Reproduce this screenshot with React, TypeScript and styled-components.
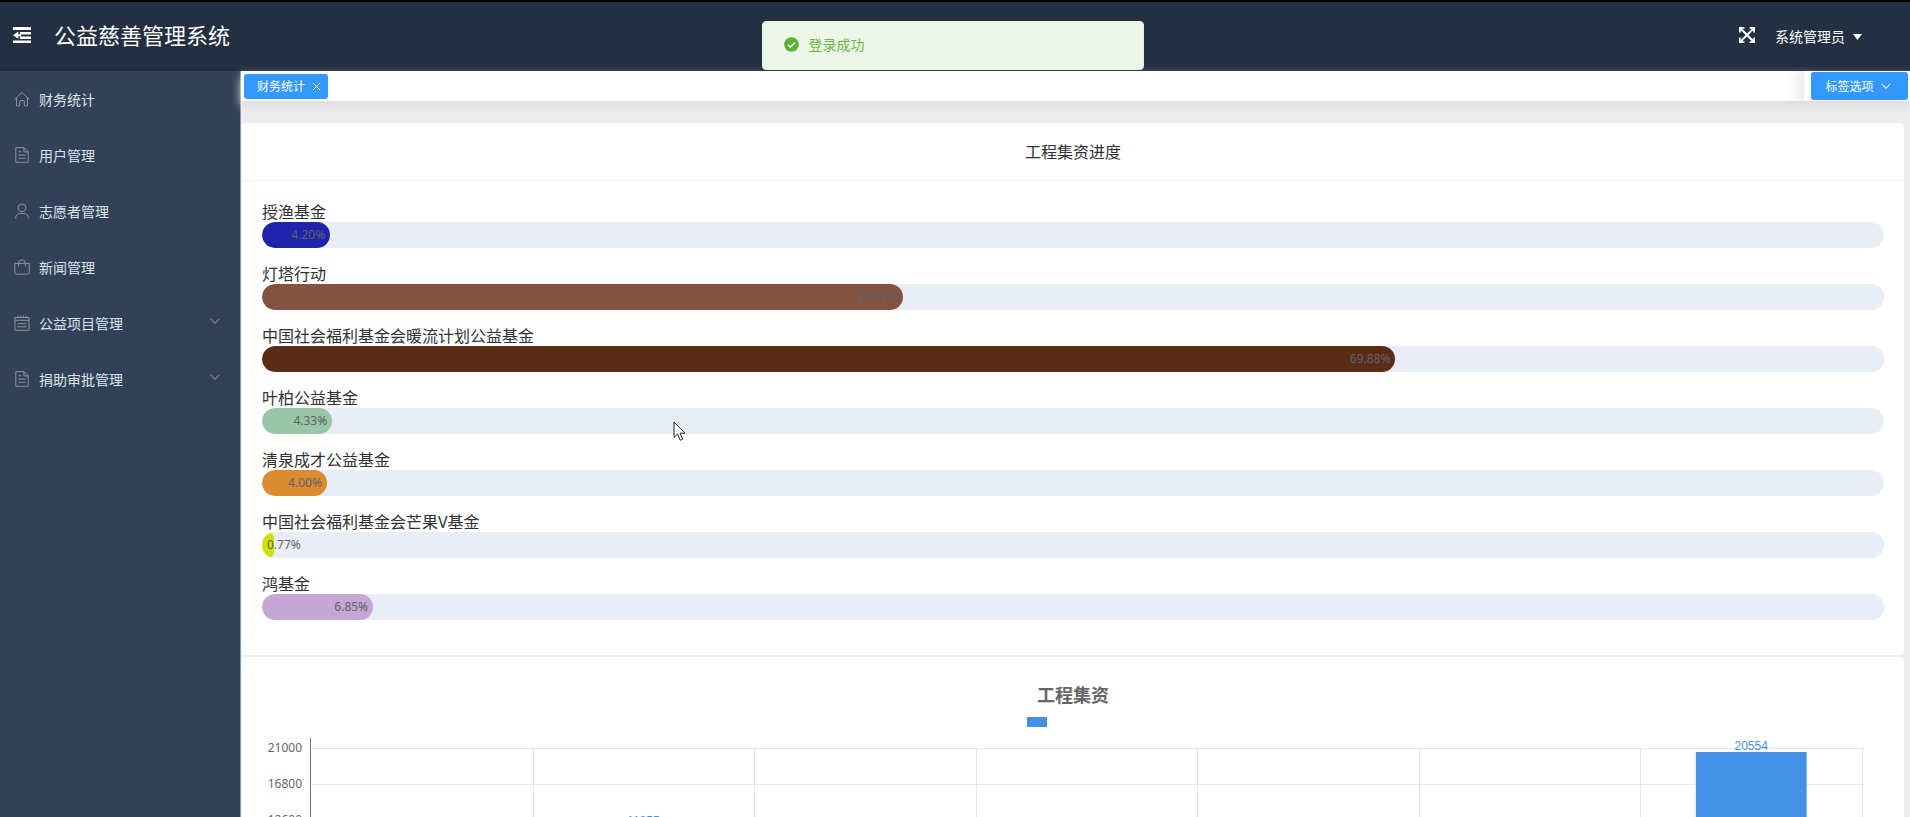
import { useLayoutEffect, useRef, useState } from "react";
import type { ReactNode } from "react";
import styled, { createGlobalStyle } from "styled-components";

const GlobalStyle = createGlobalStyle`
  * { box-sizing: border-box; }
  body {
    margin: 0;
    background: #ededed;
    color: #303133;
    font-family: "Noto Sans", "Noto Sans CJK SC", sans-serif;
    font-size: 14px;
  }
  button { font-family: inherit; border: 0; cursor: pointer; }
`;

const Page = styled.div`
  display: flex;
  flex-direction: column;
  height: 100vh;
  overflow: hidden;
`;

const Header = styled.header`
  flex: none;
  display: flex;
  align-items: center;
  height: 71px;
  padding: 0 48px 4px 12px;
  border-top: 2px solid #000;
  background: #242f42;
  color: #fff;
`;

const IconButton = styled.button`
  display: flex;
  padding: 0;
  background: none;
  color: inherit;
`;

const Title = styled.h1`
  margin: 0 auto 0 22px;
  font-size: 22px;
  font-weight: 400;
  line-height: 32px;
`;

const UserButton = styled.button`
  display: flex;
  align-items: center;
  gap: 8px;
  margin-left: 20px;
  padding: 4px 0 0;
  background: none;
  color: #fff;
  font-size: 14px;
  line-height: 20px;
`;

const Body = styled.div`
  flex: 1;
  display: flex;
  min-height: 0;
`;

const Sidebar = styled.nav`
  flex: none;
  width: 241px;
  border-right: 1px solid #8d97a5;
  background: #324157;
`;

const Menu = styled.ul`
  margin: 0;
  padding: 0;
  list-style: none;
`;

const MenuLink = styled.a`
  display: flex;
  align-items: center;
  gap: 9px;
  height: 56px;
  padding: 0 19px 0 14px;
  color: #dbe4ee;
  font-size: 14px;
  text-decoration: none;

  svg { color: #909399; }
  svg:last-child:not(:first-child) { margin: -4px 0 0 auto; }
`;

const Main = styled.main`
  flex: 1;
  display: flex;
  flex-direction: column;
  min-width: 0;
`;

const Tabs = styled.div`
  position: relative;
  z-index: 1;
  flex: none;
  display: flex;
  align-items: stretch;
  justify-content: space-between;
  height: 30px;
  padding-left: 3px;
  background: #fff;
  box-shadow: 0 5px 10px #ddd;
`;

const Tag = styled.div`
  display: flex;
  align-items: center;
  align-self: center;
  gap: 7px;
  height: 25px;
  padding: 0 7px 0 13px;
  border-radius: 3px;
  background: #39f;
  color: #fff;
  font-size: 12px;
`;

const TabTools = styled.div`
  display: flex;
  align-items: center;
  padding: 0 2px 0 7px;
  background: #fff;
  box-shadow: -3px 0 15px 3px rgba(0, 0, 0, 0.1);
  clip-path: inset(0 0 0 -20px);
`;

const ToolsButton = styled.button`
  display: flex;
  align-items: center;
  justify-content: center;
  gap: 6px;
  width: 97px;
  height: 28px;
  padding: 0 2px 0 0;
  border-radius: 3px;
  background: #39f;
  color: #fff;
  font-size: 12px;
`;

const Content = styled.div`
  flex: 1;
  min-height: 0;
  padding: 21px 5px 10px 0;
  overflow-y: auto;
  scrollbar-width: none;
`;

const Card = styled.section`
  border: 1px solid #ebeef5;
  border-radius: 4px;
  background: #fff;
`;

const CardHeader = styled.h2`
  margin: 0;
  padding: 17px 20px 15px;
  border-bottom: 1px solid #ebeef5;
  color: #303133;
  font-size: 16px;
  font-weight: 400;
  line-height: 25px;
  text-align: center;
`;

const CardBody = styled.div`
  padding: 20px;
`;

const Fund = styled.div`
  margin-bottom: 13px;
`;

const FundName = styled.div`
  height: 21px;
  color: #303133;
  font-size: 16px;
  line-height: 23px;
`;

const FundList = styled(CardBody)`
  padding-bottom: 22px;

  ${Fund} + ${Fund} { padding-top: 2px; }
`;

const Track = styled.div`
  height: 26px;
  border-radius: 100px;
  background: #e9edf5;
  overflow: hidden;
`;

const Fill = styled.div<{ $color: string }>`
  height: 100%;
  border-radius: 100px;
  background: ${(p) => p.$color};
  text-align: right;
  white-space: nowrap;
`;

const Percent = styled.span`
  display: inline-block;
  margin: 0 5px;
  color: #606266;
  font-size: 12px;
  line-height: 25px;
`;

const Message = styled.div`
  position: fixed;
  z-index: 10;
  top: 21px;
  left: 0;
  right: 5px;
  display: flex;
  align-items: center;
  gap: 10px;
  width: 382px;
  height: 49px;
  margin: 0 auto;
  padding: 0 21px 3px;
  border: 1px solid #e1f3d8;
  border-radius: 4px;
  background: #edf7e9;
  color: #67b744;
  font-size: 14px;
`;

const Pointer = styled.svg`
  position: fixed;
  z-index: 11;
  top: 421px;
  left: 673px;
  pointer-events: none;
`;

const ChartBox = styled.div`
  height: 320px;
  svg { display: block; }
`;

type IconProps = { size?: number; children: ReactNode };

const LineIcon = ({ size = 16, children }: IconProps) => (
  <svg width={size} height={size} viewBox="0 0 16 16" fill="none" stroke="currentColor" aria-hidden="true">
    {children}
  </svg>
);

const HomeIcon = () => (
  <LineIcon>
    <path d="M.7 8.4 8 1.4l7.3 7M2.5 7v7.9h3.2v-4.2c0-.8.5-1.2 1.2-1.2h2.2c.7 0 1.2.4 1.2 1.2v4.2h3.2V7" />
  </LineIcon>
);

const DocumentIcon = () => (
  <LineIcon>
    <path d="M1.8.7h8.4l4 4v10.6H1.8zM10 .9v4h4M4.4 4.7h3M4.4 8h7.2M4.4 11.3h7.2" />
  </LineIcon>
);

const UserIcon = () => (
  <LineIcon>
    <circle cx="8" cy="4.8" r="3.9" />
    <path d="M1.6 15.7c0-3.6 1.7-5.2 4.8-5.2h3.2c3.1 0 4.8 1.6 4.8 5.2" />
  </LineIcon>
);

const BagIcon = () => (
  <LineIcon>
    <path d="M.8 4.4h14.4v9.4c0 .9-.5 1.4-1.4 1.4H2.2c-.9 0-1.4-.5-1.4-1.4zM4.6 7.5V4.2a3.4 3.4 0 0 1 6.8 0v3.3" />
  </LineIcon>
);

const NotebookIcon = () => (
  <LineIcon>
    <path d="M1 2.5h14v12.8H1zM1 5.3h14M3.4 8.6h9.2M3.4 11.8h9.2M4 .5v2M6.7.5v2M9.4.5v2M12.1.5v2" />
  </LineIcon>
);

const ChevronIcon = ({ size = 12 }: { size?: number }) => (
  <LineIcon size={size}>
    <path d="m2.2 5 5.8 6 5.8-6" strokeWidth="1.4" />
  </LineIcon>
);

const FoldIcon = () => (
  <svg width="20" height="18" viewBox="0 0 20 18" fill="currentColor" aria-hidden="true">
    <path d="M1 1h18v3H1zM8 6h11v2.5H8zM8 10.5h11V13H8zM1 14.5h18V17H1zM1 9.2l5.3-3.6v2.6H9v2H6.3v2.6z" />
  </svg>
);

const ExpandIcon = () => (
  <svg width="16" height="16" viewBox="0 0 16 16" fill="currentColor" aria-hidden="true">
    <path d="M0 0h5.4v1.8H3.2L8 6.6l4.8-4.8h-2.2V0H16v5.4h-1.8V3.2L9.4 8l4.8 4.8v-2.2H16V16h-5.4v-1.8h2.2L8 9.4l-4.8 4.8h2.2V16H0v-5.4h1.8v2.2L6.6 8 1.8 3.2v2.2H0z" />
  </svg>
);

const menu = [
  { label: "财务统计", icon: <HomeIcon /> },
  { label: "用户管理", icon: <DocumentIcon /> },
  { label: "志愿者管理", icon: <UserIcon /> },
  { label: "新闻管理", icon: <BagIcon /> },
  { label: "公益项目管理", icon: <NotebookIcon />, nested: true },
  { label: "捐助审批管理", icon: <DocumentIcon />, nested: true },
];

const funds = [
  { name: "授渔基金", percent: 4.2, color: "#1f24ad" },
  { name: "灯塔行动", percent: 39.52, color: "#835240" },
  { name: "中国社会福利基金会暖流计划公益基金", percent: 69.88, color: "#5a2c17" },
  { name: "叶柏公益基金", percent: 4.33, color: "#9ac6a8" },
  { name: "清泉成才公益基金", percent: 4, color: "#db8c2f" },
  { name: "中国社会福利基金会芒果V基金", percent: 0.77, color: "#cde200" },
  { name: "鸿基金", percent: 6.85, color: "#c4a7d5" },
];

const raised = [1260, 11855, 6988, 1300, 1200, 231, 20554];
const ticks = [21000, 16800, 12600, 8400, 4200, 0];

function RaisedChart() {
  const box = useRef<HTMLDivElement>(null);
  const [width, setWidth] = useState(1622);

  useLayoutEffect(() => {
    const node = box.current;
    if (!node) return;
    const measure = () => setWidth(node.clientWidth);
    measure();
    const observer = new ResizeObserver(measure);
    observer.observe(node);
    return () => observer.disconnect();
  }, []);

  const left = 49;
  const right = width - 22;
  const top = 71;
  const plot = 181;
  const bottom = top + plot;
  const step = (right - left) / raised.length;
  const yOf = (value: number) => Math.round(bottom - (value / 21000) * plot);

  return (
    <ChartBox ref={box}>
      <svg width={width} height={320} role="img" aria-label="工程集资">
        <text x={width / 2} y={25} textAnchor="middle" fontSize="18" fontWeight="700" fill="#666">
          工程集资
        </text>
        <rect x={width / 2 - 46} y={40} width={20} height={10} fill="#4390e6" />
        {ticks.map((tick) => (
          <g key={tick}>
            <rect x={left} y={yOf(tick)} width={right - left + 2} height={1} fill="#e6e6e6" />
            <text x={40} y={yOf(tick) + 4} textAnchor="end" fontSize="12" fill="#666">
              {tick}
            </text>
          </g>
        ))}
        {raised.map((value, i) => (
          <rect key={i} x={Math.round(left + step * (i + 1))} y={top} width={1} height={plot} fill="#e6e6e6" />
        ))}
        <rect x={left - 1} y={top - 10} width={1} height={plot + 10} fill="#6e7079" />
        {raised.map((value, i) => (
          <g key={i} fill="#4390e6">
            <rect x={left + step * (i + 0.25)} y={yOf(value)} width={step / 2} height={bottom - yOf(value)} />
            <text
              x={left + step * (i + 0.5)}
              y={yOf(value) - 2}
              textAnchor="middle"
              fontSize="12"
              fontFamily="Liberation Sans, Arial, sans-serif"
            >
              {value}
            </text>
          </g>
        ))}
      </svg>
    </ChartBox>
  );
}

export default function App() {
  return (
    <Page>
      <GlobalStyle />
      <Header>
        <IconButton type="button" aria-label="折叠菜单">
          <FoldIcon />
        </IconButton>
        <Title>公益慈善管理系统</Title>
        <IconButton type="button" aria-label="全屏">
          <ExpandIcon />
        </IconButton>
        <UserButton type="button">
          系统管理员
          <svg width="9" height="6" viewBox="0 0 9 6" fill="currentColor" aria-hidden="true">
            <path d="M0 0h9L4.5 6z" />
          </svg>
        </UserButton>
      </Header>
      <Body>
        <Sidebar>
          <Menu>
            {menu.map((item) => (
              <li key={item.label}>
                <MenuLink href="#">
                  {item.icon}
                  <span>{item.label}</span>
                  {item.nested && <ChevronIcon />}
                </MenuLink>
              </li>
            ))}
          </Menu>
        </Sidebar>
        <Main>
          <Tabs>
            <Tag>
              财务统计
              <IconButton type="button" aria-label="关闭标签">
                <svg width="9" height="9" viewBox="0 0 9 9" stroke="currentColor" aria-hidden="true">
                  <path d="m1 1 7 7M8 1 1 8" />
                </svg>
              </IconButton>
            </Tag>
            <TabTools>
              <ToolsButton type="button">
                标签选项
                <ChevronIcon />
              </ToolsButton>
            </TabTools>
          </Tabs>
          <Content>
            <Card>
              <CardHeader>工程集资进度</CardHeader>
              <FundList>
                {funds.map((fund) => (
                  <Fund key={fund.name}>
                    <FundName>{fund.name}</FundName>
                    <Track>
                      <Fill $color={fund.color} style={{ width: `${fund.percent}%` }}>
                        <Percent>{fund.percent.toFixed(2)}%</Percent>
                      </Fill>
                    </Track>
                  </Fund>
                ))}
              </FundList>
            </Card>
            <Card>
              <CardBody>
                <RaisedChart />
              </CardBody>
            </Card>
          </Content>
        </Main>
      </Body>
      <Message role="alert">
        <svg width="15" height="15" viewBox="0 0 15 15" aria-hidden="true">
          <circle cx="7.5" cy="7.5" r="7.3" fill="#5cb135" />
          <path d="m4 7.8 2.4 2.3L11 5.4" fill="none" stroke="#edf7e9" strokeWidth="1.5" />
        </svg>
        登录成功
      </Message>
      <Pointer width="13" height="21" viewBox="0 0 13 21" aria-hidden="true">
        <path d="M1 1v15.5l3.6-3.4 2.6 6.2 2.5-1.1-2.6-6H12z" fill="#fff" stroke="#222" />
      </Pointer>
    </Page>
  );
}
